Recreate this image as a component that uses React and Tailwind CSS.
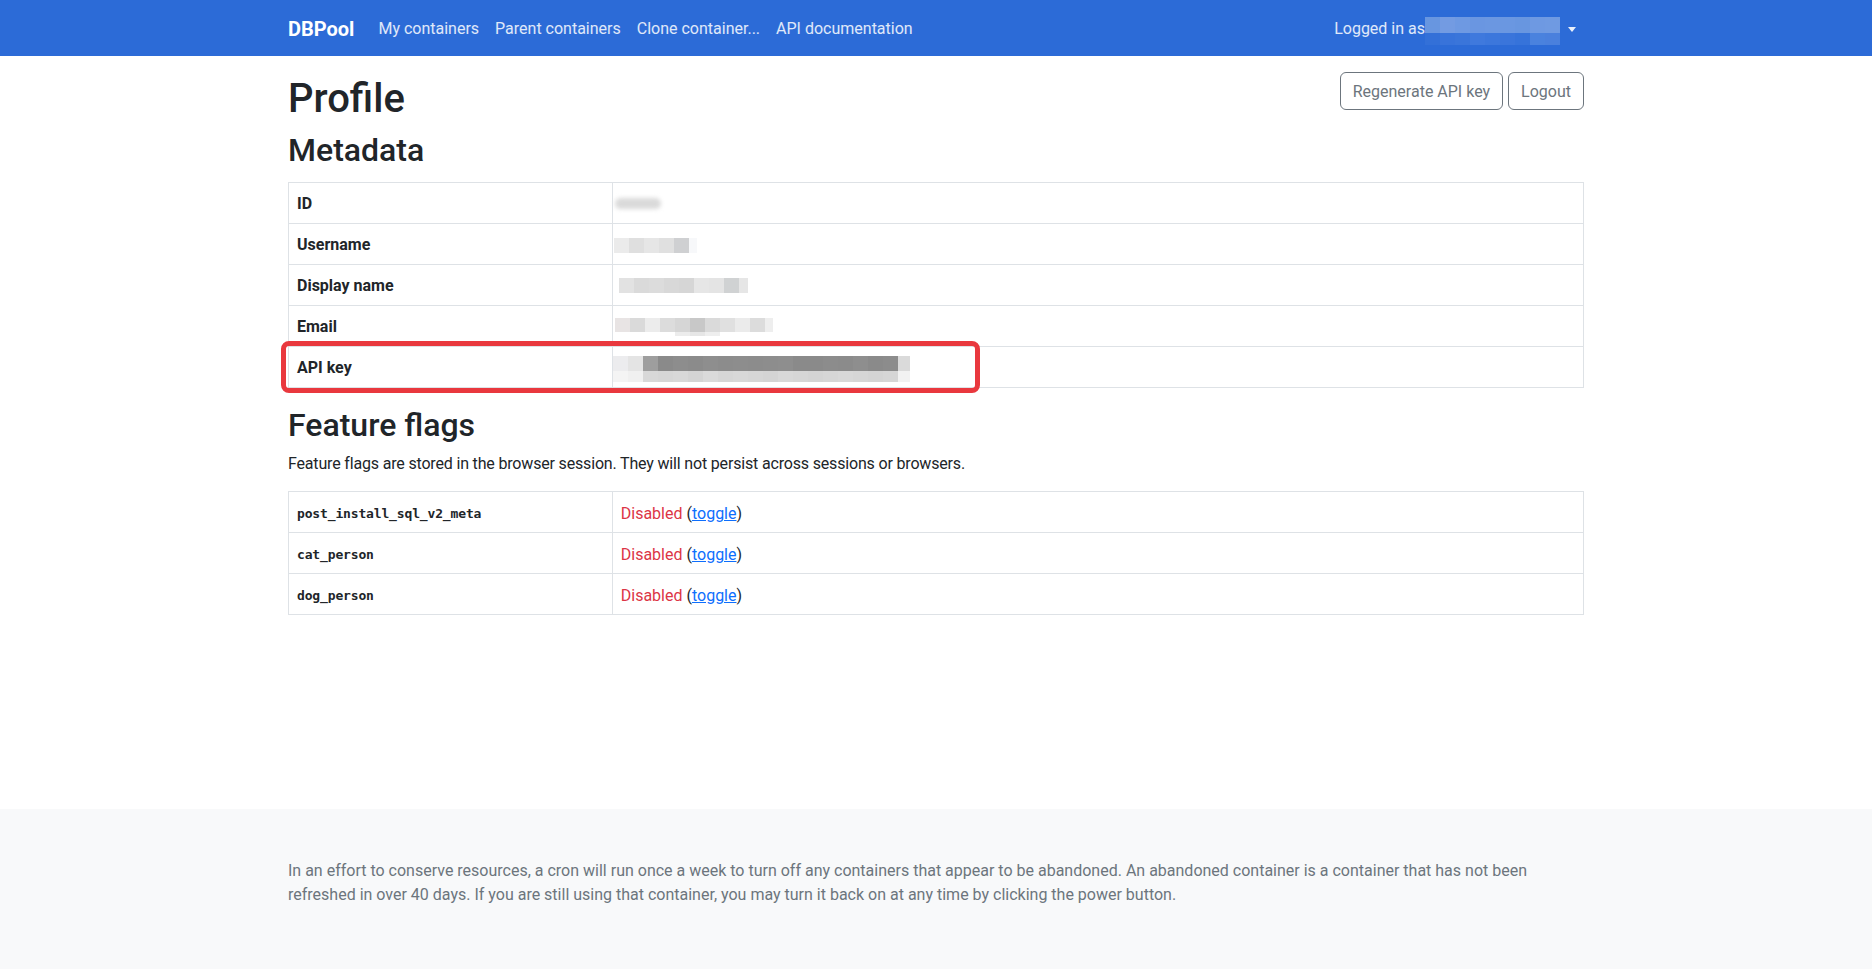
import React from "react";

function Blocks({ ml = 0, mt = 0, rows, w = 15 }) {
  return (
    <div className="flex flex-col" style={{ marginLeft: ml, marginTop: mt }}>
      {rows.map((r, i) => (
        <div key={i} className="flex" style={{ height: r.h }}>
          {r.colors.map((c, j) => (
            <span key={j} style={{ width: r.widths ? r.widths[j] : w, background: c }} />
          ))}
        </div>
      ))}
    </div>
  );
}

const cell = "border border-[#dee2e6] px-2 pt-[9px] pb-[7px] leading-6 align-top";

function MetaRow({ label, children }) {
  return (
    <tr>
      <th className={cell + " w-1/4 text-left font-bold text-[#212529]"}>{label}</th>
      <td className={cell}>
        <div className="h-6 flex items-start -mt-px">{children}</div>
      </td>
    </tr>
  );
}

function FlagRow({ name }) {
  return (
    <tr>
      <th className={cell + " w-1/4 text-left"}>
        <div className="h-6 flex items-center pt-px">
          <code className="font-['DejaVu_Sans_Mono',monospace] text-[13px] leading-none font-bold tracking-[-0.15px] text-[#212529]">
            {name}
          </code>
        </div>
      </th>
      <td className={cell + " text-[#212529]"}>
        <div className="h-6 relative top-px">
          <span className="text-[#dc3545]">Disabled</span> (
          <a href="#" className="text-[#0d6efd] underline">toggle</a>)
        </div>
      </td>
    </tr>
  );
}

const apiW = [15, 15, 15, 15, 15, 15, 15, 15, 15, 15, 15, 15, 15, 15, 15, 15, 15, 15, 15, 12];

export default function App() {
  return (
    <div className="min-h-screen flex flex-col bg-white font-['Roboto',sans-serif] text-[16px] text-[#212529]">
      <nav className="h-14 shrink-0 bg-[#2c6bd7]">
        <div className="w-[1296px] mx-auto h-full flex items-center pt-[2px]">
          <a href="#" className="text-[20px] font-bold text-white leading-[30px] mr-4">DBPool</a>
          <div className="flex items-center text-white/85 leading-6">
            <a href="#" className="px-2">My containers</a>
            <a href="#" className="px-2">Parent containers</a>
            <a href="#" className="px-2">Clone container...</a>
            <a href="#" className="px-2">API documentation</a>
          </div>
          <div className="ml-auto flex items-center px-2 text-white/85 leading-6">
            <span>Logged in as</span>
            <div className="mt-[4px]">
              <Blocks
                rows={[
                  { h: 16, colors: ["#6896e0", "#739be2", "#6e99e2", "#6a96e1", "#6b97e1", "#6a97e1", "#6896e0", "#6e99e2", "#6f9ae2"] },
                  { h: 12, colors: ["#3370d8", "#3873da", "#3a75da", "#3f79dd", "#3c77dc", "#3a75db", "#3673da", "#4a82de", "#4a80dd"] },
                ]}
              />
            </div>
            <span className="ml-2 w-0 h-0 border-t-[5px] border-x-[4px] border-x-transparent border-t-white/90" />
          </div>
        </div>
      </nav>

      <main className="flex-1">
        <div className="w-[1296px] mx-auto pt-4">
          <div className="flex justify-between items-start">
            <h1 className="text-[40px] font-medium leading-[48px] pt-[3px]">Profile</h1>
            <div className="flex gap-[5px]">
              <button className="border border-[#6c757d] text-[#6c757d] rounded-[6px] px-3 pt-[7px] pb-[5px] leading-6">
                Regenerate API key
              </button>
              <button className="border border-[#6c757d] text-[#6c757d] rounded-[6px] px-3 pt-[7px] pb-[5px] leading-6">
                Logout
              </button>
            </div>
          </div>
          <h2 className="text-[32px] font-medium leading-[38px] mt-2">Metadata</h2>

          <div className="relative mt-[13px]">
            <table className="w-full border-collapse table-fixed">
              <tbody>
                <MetaRow label="ID">
                  <span className="ml-[-6px] mt-[7px] w-[46px] h-[11px] bg-[#dadada] blur-[2px] rounded-full" />
                </MetaRow>
                <MetaRow label="Username">
                  <Blocks ml={-7} mt={6} rows={[{ h: 15, colors: ["#ebebeb", "#dfdfdf", "#e6e6e6", "#e0e0e0", "#cfd0d2", "#f7f8fa"], widths: [15, 15, 15, 15, 15, 8] }]} />
                </MetaRow>
                <MetaRow label="Display name">
                  <Blocks ml={-2} mt={5} rows={[{ h: 15, colors: ["#e2e2e2", "#dadada", "#dcdcdc", "#d8d8d8", "#d6d6d6", "#e6e6e6", "#e4e4e4", "#d0d2d3", "#e6e6e6"], widths: [15, 15, 15, 15, 15, 15, 15, 15, 9] }]} />
                </MetaRow>
                <MetaRow label="Email">
                  <Blocks
                    ml={-6}
                    mt={4}
                    rows={[
                      { h: 14, colors: ["#e8e4e4", "#dadada", "#ececec", "#dcdcdc", "#d6d6d6", "#c8c8c8", "#dadada", "#e0e0e0", "#ebebeb", "#dcdcdc", "#eeeeee"], widths: [15, 15, 15, 15, 15, 15, 15, 15, 15, 15, 8] },
                      { h: 4, colors: ["transparent", "transparent", "transparent", "transparent", "#ececec", "#e6e6e6", "#eeeeee"], widths: [15, 15, 15, 15, 15, 15, 15] },
                    ]}
                  />
                </MetaRow>
                <MetaRow label="API key">
                  <Blocks
                    ml={-8}
                    mt={1}
                    rows={[
                      { h: 15, colors: ["#ececee", "#e4e4e4", "#9e9e9e", "#8a8a8a", "#8d8d8d", "#8b8b8b", "#8e8e8e", "#8c8c8c", "#8d8d8d", "#8c8c8c", "#8d8d8d", "#8e8e8e", "#8a8a8a", "#8a8a8a", "#8c8c8c", "#8b8b8b", "#8e8e8e", "#8a8a8a", "#8c8c8c", "#dadada"], widths: apiW },
                      { h: 11, colors: ["#f4f4f4", "#f0f0f0", "#d8d8d8", "#d6d6d6", "#d8d8d8", "#d4d4d4", "#dadada", "#d6d6d6", "#d8d8d8", "#d6d6d6", "#d4d4d4", "#d8d8d8", "#d6d6d6", "#d4d4d4", "#d6d6d6", "#d8d8d8", "#d6d6d6", "#d4d4d4", "#d6d6d6", "#f2f2f2"], widths: apiW },
                    ]}
                  />
                </MetaRow>
              </tbody>
            </table>
            <div className="absolute left-[-7px] top-[159px] w-[699px] h-[52px] border-[5px] border-[#e9383e] rounded-[8px] pointer-events-none" />
          </div>

          <h2 className="text-[32px] font-medium leading-[38px] mt-[18px]">Feature flags</h2>
          <p className="mt-[8px] leading-6 tracking-[-0.17px]">
            Feature flags are stored in the browser session. They will not persist across sessions or browsers.
          </p>
          <table className="w-full border-collapse table-fixed mt-[15px]">
            <tbody>
              <FlagRow name="post_install_sql_v2_meta" />
              <FlagRow name="cat_person" />
              <FlagRow name="dog_person" />
            </tbody>
          </table>
        </div>
      </main>

      <footer className="shrink-0 bg-[#f8f9fa] pt-[50px] pb-[62px]">
        <div className="w-[1296px] mx-auto text-[#6c757d] leading-6">
          In an effort to conserve resources, a cron will run once a week to turn off any containers that appear to be abandoned. An abandoned container is a container that has not been
          <br />
          refreshed in over 40 days. If you are still using that container, you may turn it back on at any time by clicking the power button.
        </div>
      </footer>
    </div>
  );
}
